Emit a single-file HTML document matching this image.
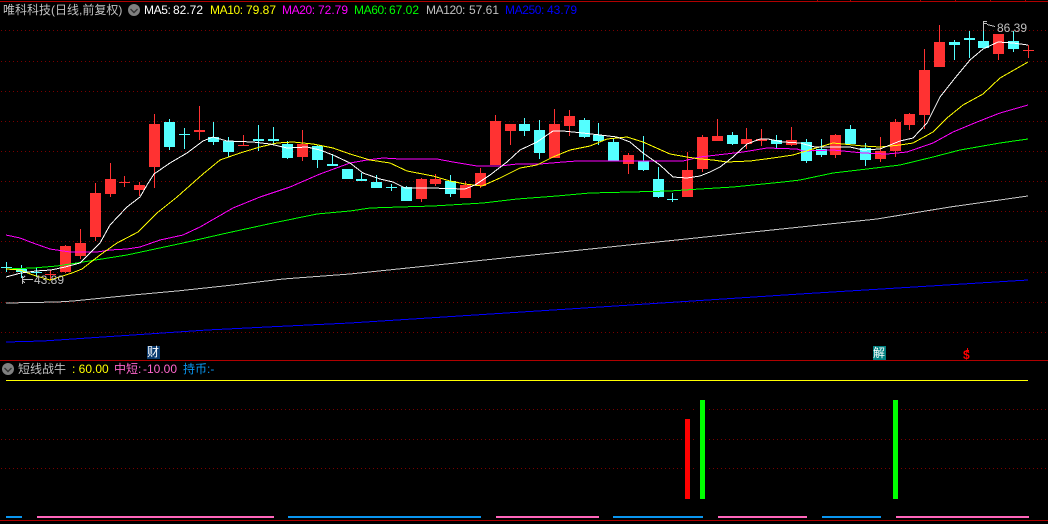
<!DOCTYPE html>
<html><head><meta charset="utf-8"><style>
html,body{margin:0;padding:0;background:#000;width:1048px;height:524px;overflow:hidden}
#c{position:relative;width:1048px;height:524px;background:#000;overflow:hidden;font-family:"Liberation Sans","WenQuanYi Zen Hei","Noto Sans CJK SC",sans-serif;font-size:12px;line-height:14px}
#c span{position:absolute;white-space:pre;top:3px}
#c span.l{letter-spacing:-.4px}
#c i{position:absolute;left:1px;width:1047px;height:1px;background:repeating-linear-gradient(90deg,#7a0000 0 1px,transparent 1px 4px)}
svg{position:absolute;left:0;top:0}
</style></head><body><div id="c">
<i style="top:30px"></i><i style="top:61px"></i><i style="top:91px"></i><i style="top:121px"></i><i style="top:151px"></i><i style="top:181px"></i><i style="top:211px"></i><i style="top:241px"></i><i style="top:272px"></i><i style="top:302px"></i><i style="top:332px"></i><i style="top:409px"></i><i style="top:439px"></i><i style="top:468px"></i>
<svg width="1048" height="524" viewBox="0 0 1048 524" fill="none" shape-rendering="crispEdges">
<path d="M0 1.5H1048M817.5 0V1M850.5 0V1M920.5 0V1M955.5 0V1M990.5 0V1M1025.5 0V1M0 360.5H1048M0 520.5H1048" stroke="#b00000"/>
<path d="M6 380.5H1028" stroke="#ffff00"/>
<rect x="682" y="405" width="11" height="95" fill="#000"/><rect x="697" y="390" width="11" height="110" fill="#000"/><rect x="890" y="390" width="11" height="110" fill="#000"/>
<rect x="685" y="419" width="5" height="80" fill="#ff0000"/>
<rect x="700" y="400" width="5" height="99" fill="#00ff00"/>
<rect x="893" y="400" width="5" height="99" fill="#00ff00"/>
<path d="M6 517H22M288 517H481M613 517H703M822 517H881" stroke="#0a96f0" stroke-width="2"/>
<path d="M37 517H274M496 517H599M718 517H807M896 517H1029" stroke="#ff66bb" stroke-width="2"/>
<!-- red wicks -->
<path stroke="#ff3232" d="M50.5 270V280M65.5 245V273M80.5 229V259M95.5 183V241M110.5 163V197M124.5 176V187M139.5 182V196M154.5 114V188M199.5 106V140M243.5 135V146M302.5 130V161M421.5 178V202M435.5 174V186M465.5 181V198M480.5 168V188M495.5 115V165M510.5 124V145M554.5 109V158M569.5 110V136M628.5 153V174M687.5 152V197M702.5 135V172M717.5 119V141M746.5 128V149M761.5 129V146M791.5 127V146M835.5 134V158M880.5 137V162M895.5 119V157M909.5 113V130M924.5 49V129M939.5 25V67M998.5 34V60M1028.5 45V58"/>
<!-- red bodies -->
<path stroke="#ff3232" stroke-width="11" d="M50.5 274V275M65.5 246V272M80.5 243V256M95.5 193V237M110.5 179V194M124.5 182V183M139.5 185V190M154.5 124V167M199.5 130V132M243.5 145V146M302.5 144V157M421.5 179V199M435.5 179V184M465.5 185V198M480.5 173V186M495.5 121V165M510.5 124V131M554.5 124V158M569.5 116V126M628.5 155V164M687.5 170V197M702.5 137V169M717.5 136V141M746.5 139V144M761.5 139V141M791.5 140V145M835.5 135V155M880.5 151V159M895.5 122V151M909.5 114V125M924.5 70V115M939.5 42V67M998.5 34V54M1028.5 50V51"/>
<!-- cyan wicks -->
<path stroke="#54ffff" d="M6.5 262V272M21.5 265V278M36.5 268V277M169.5 119V150M184.5 128V149M213.5 122V145M228.5 137V157M258.5 125V151M273.5 127V145M287.5 141V159M317.5 145V168M332.5 154V165M347.5 169V179M361.5 173V181M376.5 175V188M391.5 184V191M406.5 186V201M450.5 175V197M524.5 118V136M539.5 120V159M584.5 118V138M598.5 123V145M613.5 139V161M643.5 136V171M658.5 167V198M672.5 193V202M732.5 132V145M776.5 135V149M806.5 139V163M821.5 139V157M850.5 125V144M865.5 143V166M954.5 40V60M969.5 31V58M983.5 21V48M1013.5 31V52"/>
<!-- cyan bodies -->
<path stroke="#54ffff" stroke-width="11" d="M6.5 267V268M21.5 269V272M36.5 272V273M169.5 122V147M184.5 134V135M213.5 137V142M228.5 141V152M258.5 139V141M273.5 139V141M287.5 144V158M317.5 146V160M332.5 164V166M347.5 169V179M361.5 179V181M376.5 182V188M391.5 187V188M406.5 187V201M450.5 181V194M524.5 124V131M539.5 130V153M584.5 120V137M598.5 135V141M613.5 142V161M643.5 161V170M658.5 179V197M672.5 199V200M732.5 135V144M776.5 140V144M806.5 142V161M821.5 149V155M850.5 129V144M865.5 148V160M954.5 42V45M969.5 38V40M983.5 41V48M1013.5 41V49"/>
<!-- MA lines -->
<polyline stroke="#c8c8c8" points="6,303 57,302 73,301 133,295 177,291 233,285 283,279 350,274 600,248 877,219 950,207 1028,196"/>
<polyline stroke="#0000ff" points="6,342 43,341 73,339 133,335 207,330 267,327 350,323 600,307 800,294 1028,280"/>
<polyline stroke="#00ff00" points="6,269 33,268 57,266 83,262 127,255 183,243 227,233 273,223 317,214 350,211 370,208 400,207 433,206 483,203 517,199 557,196 590,193 670,191 700,189 733,187 783,182 800,180 833,173 867,169 900,165 933,157 960,150 1000,143 1028,139"/>
<polyline stroke="#ff00ff" points="6,235 20,238 33,243 50,249 70,252 97,252 110,250 127,249 140,247 160,240 183,235 200,227 233,208 260,197 290,187 320,174 350,163 367,160 383,158 400,159 437,159 453,162 477,166 500,166 517,164 540,164 563,162 577,161 617,161 683,161 700,157 717,155 743,152 767,148 797,149 803,151 833,150 863,153 887,154 907,152 933,143 953,132 977,122 1000,113 1028,105"/>
<polyline stroke="#ffff00" points="6,269 20,270 33,275 50,280 72,273 82,269 100,255 117,243 138,232 157,213 177,197 203,174 220,160 240,153 260,147 277,143 293,142 313,144 333,148 350,154 370,160 390,163 407,171 433,176 450,181 465,184 482,186 500,178 520,168 537,165 553,157 570,150 590,146 607,139 627,137 643,142 670,154 687,157 700,159 713,160 727,162 750,161 773,158 793,155 813,149 833,143 863,146 880,147 900,145 913,143 933,132 947,118 963,105 983,94 1000,78 1028,62"/>
<polyline stroke="#ffffff" points="6,277 21,273 36,271 51,270 65,267 80,263 100,243 110,225 127,207 140,197 147,185 154,174 170,163 187,153 203,141 213,137 227,141 253,142 270,144 287,148 307,147 320,150 333,155 350,163 363,173 380,179 393,182 405,188 430,188 465,189 475,185 490,175 507,162 520,150 537,142 553,131 563,131 583,133 600,135 617,137 630,142 643,153 660,165 673,177 687,178 700,176 710,172 720,167 733,157 747,144 760,139 768,139 783,142 800,143 815,147 833,147 850,147 863,150 880,149 890,145 900,141 913,138 927,123 940,97 955,78 970,60 983,49 998,42 1013,43 1028,45"/>
<!-- high / low arrows -->
<path stroke="#c0c0c0" d="M983.5 22V31M983 21.5H987M984 23.5H987M987 24.5L995 26.5M22.5 276V284M22 279.5H33M23 278L25 276M23 281L25 283"/>
<!-- circle icons -->
<circle cx="134" cy="10" r="6" fill="#808080" shape-rendering="auto"/>
<path d="M130.5 9L134 12.5L137.5 9" stroke="#333" stroke-width="1.4" shape-rendering="auto"/>
<circle cx="8" cy="369" r="6" fill="#808080" shape-rendering="auto"/>
<path d="M4.5 368L8 371.5L11.5 368" stroke="#333" stroke-width="1.4" shape-rendering="auto"/>
<rect x="147" y="346" width="13" height="13" fill="#0a3a6e"/>
<rect x="873" y="346" width="13" height="14" fill="#008080"/>
<path d="M967.5 348V351M966 350.5H969" stroke="#ff0000"/>
</svg>
<span style="left:3px;color:#c0c0c0">唯科科技(日线,前复权)</span>
<span class="l" style="left:144px;color:#fff">MA5:</span><span style="left:173px;color:#fff">82.72</span>
<span class="l" style="left:210px;color:#ff0">MA10:</span><span style="left:246px;color:#ff0">79.87</span>
<span class="l" style="left:282px;color:#f0f">MA20:</span><span style="left:318px;color:#f0f">72.79</span>
<span class="l" style="left:354px;color:#0f0">MA60:</span><span style="left:389px;color:#0f0">67.02</span>
<span class="l" style="left:426px;color:#c0c0c0">MA120:</span><span style="left:469px;color:#c0c0c0">57.61</span>
<span class="l" style="left:505px;color:#0000ff">MA250:</span><span style="left:547px;color:#0000ff">43.79</span>
<span style="left:997px;top:21px;color:#c0c0c0">86.39</span>
<span style="left:34px;top:273px;color:#c0c0c0">43.89</span>
<span style="left:147px;top:345px;color:#fff">财</span>
<span style="left:873px;top:346px;color:#fff">解</span>
<span style="left:963px;top:348px;color:#f00;font-weight:bold">$</span>
<span style="left:18px;top:362px;color:#c0c0c0">短线战牛</span>
<span style="left:72px;top:362px;color:#ff0">: 60.00</span>
<span style="left:114px;top:362px;color:#ff66cc">中短:</span><span style="left:143px;top:362px;color:#ff66cc">-10.00</span>
<span style="left:183px;top:362px;color:#0a96f0">持币:-</span>
</div></body></html>
